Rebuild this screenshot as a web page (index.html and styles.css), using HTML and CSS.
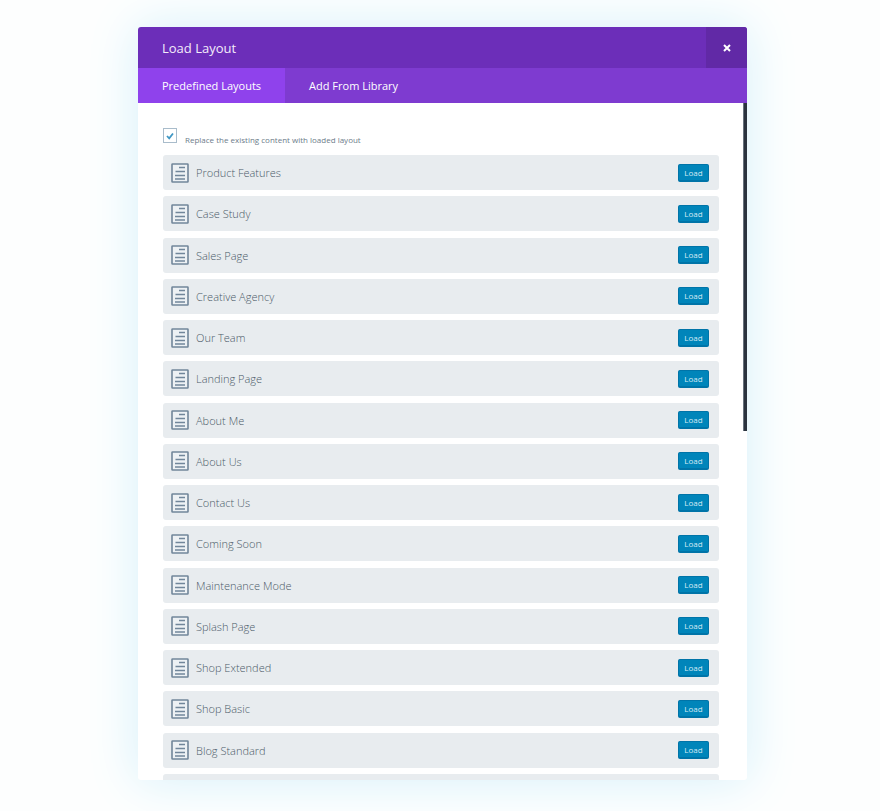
FILE: index.html
```
<!DOCTYPE html>
<html lang="en">
<head>
<meta charset="utf-8">
<meta name="viewport" content="width=device-width, initial-scale=1">
<title>Load Layout</title>
<link rel="stylesheet" href="styles.css">
</head>
<body>
<svg class="symbols" aria-hidden="true">
  <symbol id="page" viewBox="0 0 18 20">
    <rect x="1" y="1" width="16" height="18" rx="0.5" fill="#edf1f4" stroke="#71869a" stroke-width="1.6"/>
    <path d="M8 4.5H14M4.5 8.5H14M4 12.5H14M4 16H14" fill="none" stroke="#71869a" stroke-width="1.5"/>
  </symbol>
</svg>
<main class="modal">
  <header class="modal-header">
    <h1>Load Layout</h1>
    <button class="close" type="button" aria-label="Close">
      <svg viewBox="0 0 8 8" aria-hidden="true"><path d="M1 1L7 7M7 1L1 7"/></svg>
    </button>
  </header>
  <nav class="tabs">
    <a class="active" href="#predefined">Predefined Layouts</a>
    <a href="#library">Add From Library</a>
  </nav>
  <section class="modal-body" id="predefined">
    <div class="replace">
      <input type="checkbox" id="replace" checked>
      <label for="replace">Replace the existing content with loaded layout</label>
    </div>
    <ul class="layouts">
      <li><svg class="icon"><use href="#page"/></svg><span>Product Features</span><button type="button">Load</button></li>
      <li><svg class="icon"><use href="#page"/></svg><span>Case Study</span><button type="button">Load</button></li>
      <li><svg class="icon"><use href="#page"/></svg><span>Sales Page</span><button type="button">Load</button></li>
      <li><svg class="icon"><use href="#page"/></svg><span>Creative Agency</span><button type="button">Load</button></li>
      <li><svg class="icon"><use href="#page"/></svg><span>Our Team</span><button type="button">Load</button></li>
      <li><svg class="icon"><use href="#page"/></svg><span>Landing Page</span><button type="button">Load</button></li>
      <li><svg class="icon"><use href="#page"/></svg><span>About Me</span><button type="button">Load</button></li>
      <li><svg class="icon"><use href="#page"/></svg><span>About Us</span><button type="button">Load</button></li>
      <li><svg class="icon"><use href="#page"/></svg><span>Contact Us</span><button type="button">Load</button></li>
      <li><svg class="icon"><use href="#page"/></svg><span>Coming Soon</span><button type="button">Load</button></li>
      <li><svg class="icon"><use href="#page"/></svg><span>Maintenance Mode</span><button type="button">Load</button></li>
      <li><svg class="icon"><use href="#page"/></svg><span>Splash Page</span><button type="button">Load</button></li>
      <li><svg class="icon"><use href="#page"/></svg><span>Shop Extended</span><button type="button">Load</button></li>
      <li><svg class="icon"><use href="#page"/></svg><span>Shop Basic</span><button type="button">Load</button></li>
      <li><svg class="icon"><use href="#page"/></svg><span>Blog Standard</span><button type="button">Load</button></li>
      <li></li>
    </ul>
    <div class="scroll-thumb"></div>
  </section>
</main>
</body>
</html>
```
FILE: styles.css
```
* {
  box-sizing: border-box;
}

body {
  display: flex;
  flex-direction: column;
  height: 100vh;
  margin: 0;
  padding: 27px 133px 31px 138px;
  overflow: hidden;
  background: #fdfefe;
  font-family: "Open Sans", sans-serif;
}

button {
  border: 0;
  padding: 0;
  font-family: inherit;
  cursor: pointer;
}

.symbols {
  position: absolute;
  width: 0;
  height: 0;
}

.modal {
  display: flex;
  flex: 1;
  flex-direction: column;
  min-height: 0;
  border-radius: 3px;
  background: #fff;
  box-shadow: 0 0 50px #d5f1fb;
}

.modal-header {
  display: flex;
  flex: none;
  align-items: stretch;
  justify-content: space-between;
  height: 41px;
  padding-left: 24px;
  border-radius: 3px 3px 0 0;
  background: #6c2eb9;
  color: #f3ecfa;
}

.modal-header h1 {
  margin: 0;
  font-size: 13px;
  font-weight: 400;
  line-height: 42px;
}

.close {
  display: flex;
  align-items: center;
  justify-content: center;
  width: 41px;
  border-radius: 0 3px 0 0;
  background: #6129a6;
}

.close svg {
  width: 8px;
  height: 8px;
  fill: none;
  stroke: #fff;
  stroke-width: 2;
}

.tabs {
  display: flex;
  flex: none;
  height: 35px;
  background: #7e3bd0;
}

.tabs a {
  padding: 0 24px;
  color: #fff;
  font-size: 11px;
  font-weight: 500;
  line-height: 36px;
  text-decoration: none;
}

.tabs .active {
  background: #8f42ec;
}

.modal-body {
  position: relative;
  flex: 1;
  min-height: 0;
  padding: 25px 28px 0 25px;
  overflow: hidden;
  border-radius: 0 0 3px 3px;
}

.replace {
  display: flex;
  align-items: flex-end;
  gap: 8px;
  height: 19px;
  margin-bottom: 8px;
}

.replace input {
  flex: none;
  align-self: flex-start;
  width: 14px;
  height: 15px;
  margin: 0;
  appearance: none;
  border: 1px solid #a9bccb;
  background: #fff;
}

.replace input:checked {
  background: url("data:image/svg+xml,%3Csvg xmlns='http://www.w3.org/2000/svg' viewBox='0 0 8 8'%3E%3Cpath d='M1 4L3.2 6.3L7 1.5' fill='none' stroke='%233f97c4' stroke-width='1.8'/%3E%3C/svg%3E") right 2px bottom 2px / 8px 8px no-repeat;
}

.replace label {
  color: #6d7c8a;
  font-size: 8px;
  line-height: 14px;
}

.layouts {
  display: grid;
  align-content: space-between;
  min-height: 654px;
  margin: 0;
  padding: 0;
  list-style: none;
}

.layouts li {
  display: flex;
  align-items: center;
  gap: 7px;
  height: 35px;
  padding: 0 10px 0 8px;
  border-radius: 3px;
  background: #e8ecef;
  color: #4b5a68;
  font-size: 11px;
  font-weight: 300;
}

.icon {
  flex: none;
  width: 18px;
  height: 20px;
}

.layouts button {
  width: 31px;
  height: 18px;
  margin-left: auto;
  border: 1px solid #0074a8;
  border-bottom-width: 2px;
  border-radius: 2px;
  background: #0085ba;
  color: #d3eaf4;
  font-size: 8px;
  line-height: 15px;
}

.scroll-thumb {
  position: absolute;
  top: 0;
  right: 0;
  width: 4px;
  height: 328px;
  border-left: 1px solid #68727d;
  background: #2b333e;
}
```
